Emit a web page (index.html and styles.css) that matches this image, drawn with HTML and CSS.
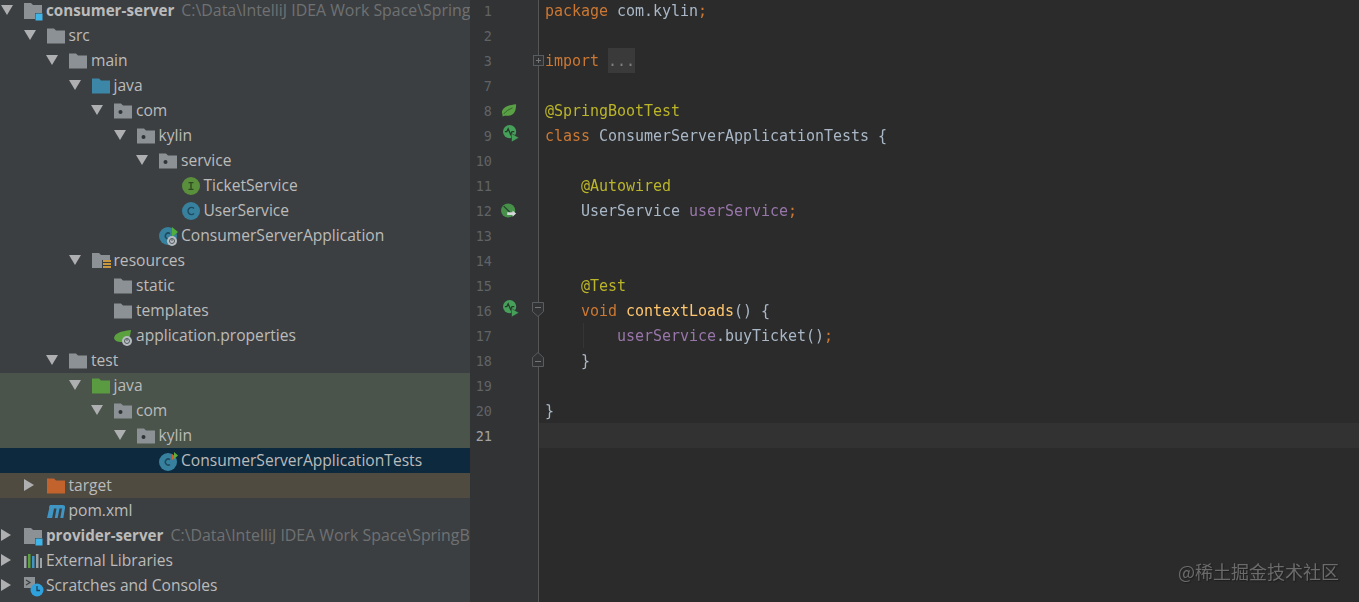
FILE: index.html
```html
<!DOCTYPE html>
<html lang="en">
<head>
    <meta charset="UTF-8">
    <meta name="viewport" content="width=device-width, initial-scale=1.0">
    <title>ConsumerServerApplicationTests</title>
    <link rel="stylesheet" href="styles.css">
</head>
<body>
    <svg class="defs" width="0" height="0">
        <symbol id="folder" viewBox="0 0 18 18"><path d="M0 1.500h7l2 2h9v13H0z"/></symbol>
        <symbol id="pkg" viewBox="0 0 18 18"><path d="M0 1.500h7l2 2h9v13H0z"/><circle cx="6.500" cy="10" r="2" fill="#2f3436"/></symbol>
        <symbol id="module" viewBox="0 0 18 18"><path d="M0 1h7l2 2h9v8h-7v6H0z" fill="#8b9195"/><rect x="11.500" y="11.500" width="7" height="7" fill="#3fb4e8"/></symbol>
        <symbol id="res" viewBox="0 0 18 18"><path d="M0 1h7l2 2h9v5h-8v8H0z" fill="#8b9195"/><path d="M11 8h8v2h-8zM11 11h8v2h-8zM11 14h8v2h-8z" fill="#c9973f"/></symbol>
        <symbol id="iface" viewBox="0 0 18 18"><circle cx="9" cy="9" r="9" fill="#5a8f3c"/><path d="M6.500 5h5v1.200H9.700v5.600h1.800V13h-5v-1.200h1.800V6.200H6.500z" fill="#2f4a23"/></symbol>
        <symbol id="cls" viewBox="0 0 18 18"><circle cx="9" cy="9" r="9" fill="#37819f"/><path d="M12 6.500A3.500 3.500 0 1 0 12 11.500" fill="none" stroke="#1d4a5e" stroke-width="1.500"/></symbol>
        <symbol id="boot" viewBox="0 0 18 18"><circle cx="9" cy="9" r="9" fill="#37819f"/><path d="M11 6.500A3 3 0 1 0 11 11.500" fill="none" stroke="#1d4a5e" stroke-width="1.500"/><path d="M13 0l6 5-6 5z" fill="#4fae3c"/><circle cx="13" cy="14" r="5" fill="#b5bcc1"/><circle cx="13" cy="14" r="2.500" fill="none" stroke="#55595c"/><path d="M13 11.500v2.500" stroke="#55595c"/></symbol>
        <symbol id="test" viewBox="0 0 18 18"><circle cx="9" cy="10" r="9" fill="#37819f"/><path d="M11 7.500A3 3 0 1 0 11 12.500" fill="none" stroke="#1d4a5e" stroke-width="1.500"/><path d="M13 2l3.500 3-3.500 3z" fill="#d0603a"/><path d="M15 0l4 3.500-4 3.500z" fill="#5fae3c"/></symbol>
        <symbol id="props" viewBox="0 0 18 18"><path d="M0 11c1-5 6-6.500 17-8-1 7-2 12-8 12-4 0-8 0-9-4z" fill="#5ba13f"/><circle cx="13" cy="14" r="5" fill="#b5bcc1"/><circle cx="13" cy="14" r="2.500" fill="none" stroke="#55595c"/><path d="M13 11.500V14" stroke="#55595c"/></symbol>
        <symbol id="maven" viewBox="0 0 18 18"><path d="M3 3h12.500c2 0 2.800 1.200 2.500 3l-1.700 10h-3L15 6.500h-2.500L10.700 16H7.800L9.500 6.500H7L5.200 16H0L2.200 6.500 2 5z" fill="#3f95c4"/></symbol>
        <symbol id="libs" viewBox="0 0 18 18"><path d="M0 4h2.500v12H0z" fill="#9ea3a6"/><path d="M4 2h2.500v14H4z" fill="#5ba13f"/><path d="M8 4h2.500v12H8z" fill="#3f95c4"/><path d="M12 2h2.500v14H12z" fill="#9ea3a6"/><path d="M16 6h2v10h-2z" fill="#9ea3a6"/></symbol>
        <symbol id="scratch" viewBox="0 0 18 18"><path d="M0 0h11v11H0z" fill="#8b9195"/><path d="M2 3l4 2.500L2 8" fill="none" stroke="#3c3f41" stroke-width="1.200"/><circle cx="13" cy="13" r="6.500" fill="#2fa2de"/><path d="M13 9v4.500h3" fill="none" stroke="#1c4257" stroke-width="1.300"/></symbol>
        <symbol id="leaf" viewBox="0 0 18 14"><path d="M1 9C2 3 8 1 17 0c0 7-2 13-9 13-3 0-5 0-6 1z" fill="#5aa045"/><path d="M3 11C6 7 9 6 13 4" fill="none" stroke="#2f5e2a"/></symbol>
        <symbol id="run" viewBox="0 0 18 18"><circle cx="7" cy="7" r="7" fill="#46a05a"/><path d="M2 7h2l1.500-3 2.500 6 1.500-3h2.500" fill="none" stroke="#263c2b" stroke-width="1.400"/><path d="M9 9l8 4.500-8 4.500z" fill="#46a05a" stroke="#313335" stroke-width=".6"/></symbol>
        <symbol id="bean" viewBox="0 0 18 16"><circle cx="8" cy="8" r="8" fill="#46904a"/><path d="M3 3l9 9" stroke="#263c2b" stroke-width="1.300"/><path d="M7 10h6V8l4 3.500-4 3.500v-2H7z" fill="#d5d8da"/></symbol>
        <symbol id="fold-start" viewBox="0 0 12 15"><path d="M.5.500h11v9l-5.500 5-5.500-5z" fill="#313335" stroke="#5a5d5f"/><path d="M3 5.500h6" stroke="#74777a"/></symbol>
        <symbol id="fold-end" viewBox="0 0 12 15"><path d="M.5 14.500h11v-9L6 .500l-5.500 5z" fill="#313335" stroke="#5a5d5f"/><path d="M3 9.500h6" stroke="#74777a"/></symbol>
    </svg>

    <div class="app">
        <div class="tree">
            <div class="row d0"><span class="arrow down"></span><svg class="icon"><use href="#module"/></svg><span class="name bold">consumer-server</span><span class="path">C:\Data\IntelliJ IDEA Work Space\Spring</span></div>
            <div class="row d1"><span class="arrow down"></span><svg class="icon grey"><use href="#folder"/></svg><span class="name">src</span></div>
            <div class="row d2"><span class="arrow down"></span><svg class="icon grey"><use href="#folder"/></svg><span class="name">main</span></div>
            <div class="row d3"><span class="arrow down"></span><svg class="icon blue"><use href="#folder"/></svg><span class="name">java</span></div>
            <div class="row d4"><span class="arrow down"></span><svg class="icon grey"><use href="#pkg"/></svg><span class="name">com</span></div>
            <div class="row d5"><span class="arrow down"></span><svg class="icon grey"><use href="#pkg"/></svg><span class="name">kylin</span></div>
            <div class="row d6"><span class="arrow down"></span><svg class="icon grey"><use href="#pkg"/></svg><span class="name">service</span></div>
            <div class="row d7"><span class="arrow"></span><svg class="icon"><use href="#iface"/></svg><span class="name">TicketService</span></div>
            <div class="row d7"><span class="arrow"></span><svg class="icon"><use href="#cls"/></svg><span class="name">UserService</span></div>
            <div class="row d6"><span class="arrow"></span><svg class="icon"><use href="#boot"/></svg><span class="name">ConsumerServerApplication</span></div>
            <div class="row d3"><span class="arrow down"></span><svg class="icon"><use href="#res"/></svg><span class="name">resources</span></div>
            <div class="row d4"><span class="arrow"></span><svg class="icon grey"><use href="#folder"/></svg><span class="name">static</span></div>
            <div class="row d4"><span class="arrow"></span><svg class="icon grey"><use href="#folder"/></svg><span class="name">templates</span></div>
            <div class="row d4"><span class="arrow"></span><svg class="icon"><use href="#props"/></svg><span class="name">application.properties</span></div>
            <div class="row d2"><span class="arrow down"></span><svg class="icon grey"><use href="#folder"/></svg><span class="name">test</span></div>
            <div class="row d3 tested"><span class="arrow down"></span><svg class="icon green"><use href="#folder"/></svg><span class="name">java</span></div>
            <div class="row d4 tested"><span class="arrow down"></span><svg class="icon grey"><use href="#pkg"/></svg><span class="name">com</span></div>
            <div class="row d5 tested"><span class="arrow down"></span><svg class="icon grey"><use href="#pkg"/></svg><span class="name">kylin</span></div>
            <div class="row d6 selected"><span class="arrow"></span><svg class="icon"><use href="#test"/></svg><span class="name">ConsumerServerApplicationTests</span></div>
            <div class="row d1 excluded"><span class="arrow right"></span><svg class="icon orange"><use href="#folder"/></svg><span class="name">target</span></div>
            <div class="row d1"><span class="arrow"></span><svg class="icon"><use href="#maven"/></svg><span class="name">pom.xml</span></div>
            <div class="row d0"><span class="arrow right"></span><svg class="icon"><use href="#module"/></svg><span class="name bold">provider-server</span><span class="path">C:\Data\IntelliJ IDEA Work Space\SpringB</span></div>
            <div class="row d0"><span class="arrow right"></span><svg class="icon"><use href="#libs"/></svg><span class="name">External Libraries</span></div>
            <div class="row d0"><span class="arrow right"></span><svg class="icon"><use href="#scratch"/></svg><span class="name">Scratches and Consoles</span></div>
        </div>

        <div class="gutter">
            <div class="ln"><span class="num">1</span></div>
            <div class="ln"><span class="num">2</span></div>
            <div class="ln"><span class="num">3</span><span class="fold plus"></span></div>
            <div class="ln"><span class="num">7</span></div>
            <div class="ln"><span class="num">8</span><svg class="mark leaf"><use href="#leaf"/></svg></div>
            <div class="ln"><span class="num">9</span><svg class="mark run"><use href="#run"/></svg></div>
            <div class="ln"><span class="num">10</span></div>
            <div class="ln"><span class="num">11</span></div>
            <div class="ln"><span class="num">12</span><svg class="mark leaf"><use href="#bean"/></svg></div>
            <div class="ln"><span class="num">13</span></div>
            <div class="ln"><span class="num">14</span></div>
            <div class="ln"><span class="num">15</span></div>
            <div class="ln"><span class="num">16</span><svg class="mark run"><use href="#run"/></svg><svg class="mark foldmark"><use href="#fold-start"/></svg></div>
            <div class="ln"><span class="num">17</span></div>
            <div class="ln"><span class="num">18</span><svg class="mark foldmark"><use href="#fold-end"/></svg></div>
            <div class="ln"><span class="num">19</span></div>
            <div class="ln"><span class="num">20</span></div>
            <div class="ln now"><span class="num">21</span></div>
        </div>

        <div class="editor">
<div class="code"><span class="kw">package</span> com.kylin<span class="kw">;</span></div>
<div class="code"></div>
<div class="code"><span class="kw">import</span> <span class="folded">...</span></div>
<div class="code"></div>
<div class="code"><span class="ann">@SpringBootTest</span></div>
<div class="code"><span class="kw">class</span> ConsumerServerApplicationTests {</div>
<div class="code"></div>
<div class="code">    <span class="ann">@Autowired</span></div>
<div class="code">    UserService <span class="field">userService</span><span class="kw">;</span></div>
<div class="code"></div>
<div class="code"></div>
<div class="code">    <span class="ann">@Test</span></div>
<div class="code">    <span class="kw">void</span> <span class="fn">contextLoads</span>() {</div>
<div class="code guide">        <span class="field">userService</span>.buyTicket()<span class="kw">;</span></div>
<div class="code">    }</div>
<div class="code"></div>
<div class="code">}</div>
<div class="code now"></div>
        </div>
    </div>

    <div class="watermark">@稀土掘金技术社区</div>
</body>
</html>
```

FILE: styles.css
```css
html, body {
    margin: 0;
    height: 100%;
    overflow: hidden;
    background-color: #2b2b2b;
}
.defs {
    position: absolute;
}
symbol {
    overflow: visible;
}
.app {
    display: flex;
    height: 602px;
    filter: blur(0.4px);
}

/* project tree */
.tree {
    width: 470px;
    flex: none;
    overflow: hidden;
    background-color: #3c3f41;
    font-family: "Open Sans", sans-serif;
    font-size: 15.6px;
    color: #bbbbbb;
    margin-top: -2px;
    height: 604px;
}
.row {
    display: flex;
    align-items: center;
    height: 25px;
    white-space: nowrap;
}
.d0 { padding-left: 0; }
.d1 { padding-left: 22.5px; }
.d2 { padding-left: 45px; }
.d3 { padding-left: 67.5px; }
.d4 { padding-left: 90px; }
.d5 { padding-left: 112.5px; }
.d6 { padding-left: 135px; }
.d7 { padding-left: 157.5px; }
.tested { background-color: #4a544a; }
.selected { background-color: #0d293e; }
.excluded { background-color: #4f4b41; }
.arrow {
    width: 24px;
    flex: none;
    height: 12px;
}
.arrow.down::before {
    content: "";
    display: block;
    margin: 0 0 0 1px;
    border-top: 10px solid #adafb1;
    border-left: 6px solid transparent;
    border-right: 6px solid transparent;
    width: 0;
}
.arrow.right::before {
    content: "";
    display: block;
    margin: -1px 0 0 1px;
    border-left: 10px solid #adafb1;
    border-top: 6px solid transparent;
    border-bottom: 6px solid transparent;
    width: 0;
}
.icon {
    width: 18px;
    height: 18px;
    flex: none;
    margin-right: 4px;
    overflow: visible;
}
.grey { fill: #8b9195; }
.blue { fill: #3c87a8; }
.green { fill: #5a9a40; }
.orange { fill: #c2622c; }
.name {
    margin-bottom: 2px;
}
.bold {
    font-weight: 700;
    font-size: 15.2px;
}
.path {
    margin-left: 7px;
    margin-bottom: 2px;
    font-size: 15.9px;
    color: #6f7173;
}

/* line numbers */
.gutter {
    width: 68px;
    flex: none;
    margin-top: -2px;
    height: 604px;
    background-color: #313335;
    border-right: 1px solid #555555;
    font-family: "DejaVu Sans Mono", monospace;
    font-size: 13.5px;
    color: #606366;
}
.ln {
    display: flex;
    align-items: center;
    height: 25px;
    position: relative;
}
.num {
    width: 22px;
    text-align: right;
}
.ln.now .num { color: #a4a3a3; }
.mark {
    position: absolute;
    overflow: visible;
}
.leaf {
    left: 31px;
    top: 5px;
    width: 16px;
    height: 15px;
}
.run {
    left: 33px;
    top: 2px;
    width: 17px;
    height: 17px;
}
.foldmark {
    left: 62px;
    top: 4px;
    width: 12px;
    height: 15px;
    z-index: 1;
}
.fold {
    position: absolute;
    left: 63px;
    top: 7px;
    width: 9px;
    height: 9px;
    border: 1px solid #5a5d5f;
    background-color: #313335;
    z-index: 1;
}
.fold::before {
    content: "";
    position: absolute;
    left: 2px;
    top: 4px;
    width: 5px;
    height: 1px;
    background-color: #74777a;
}
.fold.plus::after {
    content: "";
    position: absolute;
    left: 4px;
    top: 2px;
    width: 1px;
    height: 5px;
    background-color: #74777a;
}

/* code */
.editor {
    flex: 1;
    margin-top: -2px;
    height: 604px;
    font-family: "DejaVu Sans Mono", monospace;
    font-size: 15px;
    letter-spacing: -0.03px;
    color: #a9b7c6;
}
.code {
    height: 25px;
    line-height: 26px;
    padding-left: 6px;
    white-space: pre;
    position: relative;
}
.code.now { background-color: #323232; }
.guide::before {
    content: "";
    position: absolute;
    left: 44px;
    top: 0;
    width: 1px;
    height: 25px;
    background-color: #353535;
}
.kw { color: #cc7832; }
.ann { color: #bbb529; }
.field { color: #9876aa; }
.fn { color: #ffc66d; }
.folded {
    display: inline-block;
    height: 25px;
    background-color: #3a3a3a;
    color: #808080;
}

.watermark {
    position: absolute;
    right: 20px;
    bottom: 18px;
    font-family: "Noto Sans CJK SC", sans-serif;
    font-size: 18px;
    color: #6b6b6b;
    text-shadow: 1px 1px 1px #1e1e1e;
}
```
